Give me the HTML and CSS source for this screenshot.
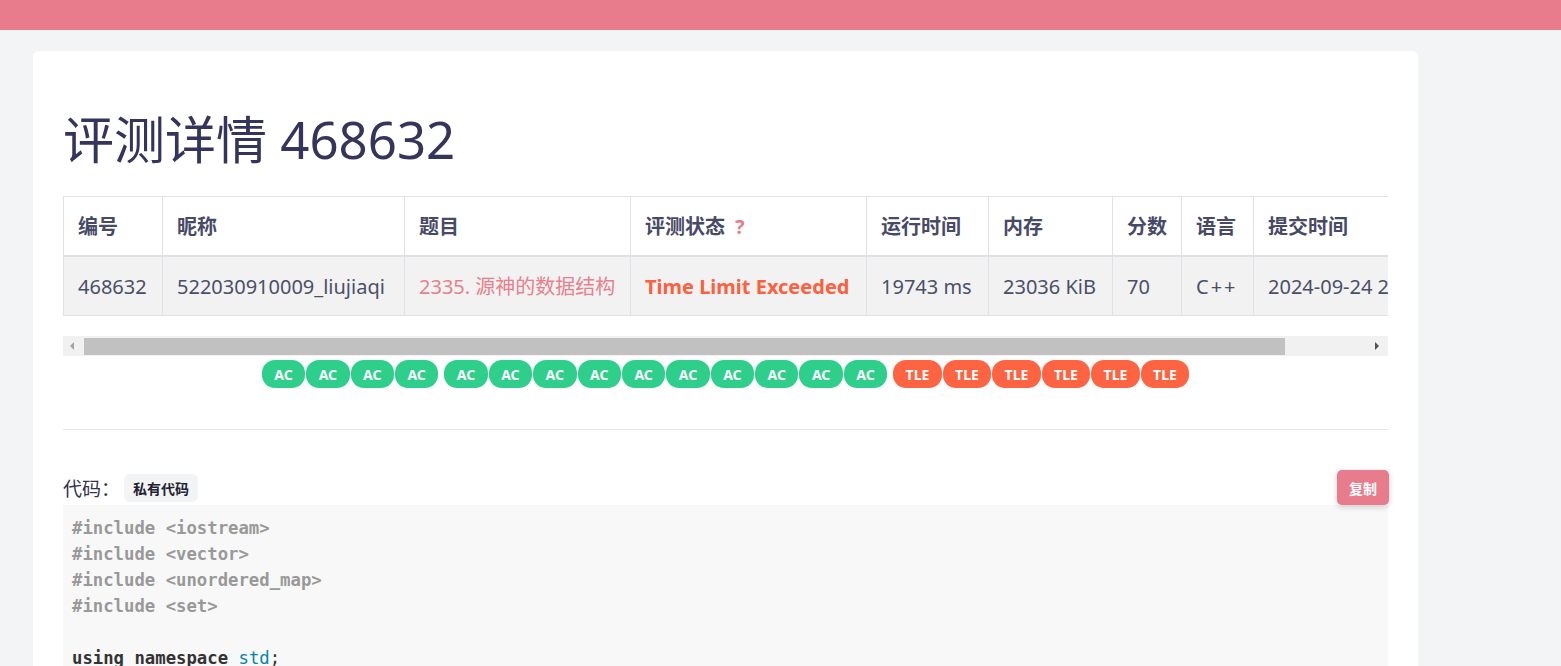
FILE: index.html
```html
<!DOCTYPE html>
<html lang="zh-CN">
<head>
<meta charset="utf-8">
<title>评测详情 468632</title>
<link rel="stylesheet" href="styles.css">
</head>
<body>
<nav class="topbar"></nav>
<main class="page">
  <section class="card">
    <h1 class="title">评测详情 468632</h1>
    <div class="table-scroll">
      <table class="info">
        <colgroup>
          <col class="c1"><col class="c2"><col class="c3"><col class="c4"><col class="c5"><col class="c6"><col class="c7"><col class="c8"><col class="c9">
        </colgroup>
        <thead>
          <tr>
            <th>编号</th><th>昵称</th><th>题目</th><th>评测状态<span class="help">?</span></th><th>运行时间</th><th>内存</th><th>分数</th><th>语言</th><th>提交时间</th>
          </tr>
        </thead>
        <tbody>
          <tr>
            <td>468632</td><td>522030910009_liujiaqi</td><td><a class="plink" href="#">2335. 源神的数据结构</a></td><td class="tle-text">Time Limit Exceeded</td><td>19743 ms</td><td>23036 KiB</td><td>70</td><td class="lang">C++</td><td>2024-09-24 20:51:36</td>
          </tr>
        </tbody>
      </table>
    </div>
    <div class="fake-scrollbar">
      <span class="sb-btn sb-left"><span class="tri-left"></span></span>
      <span class="sb-thumb"></span>
      <span class="sb-rest"></span>
      <span class="sb-btn sb-right"><span class="tri-right"></span></span>
    </div>
    <div class="verdicts">
      <div class="group">
        <span class="pill ac">AC</span><span class="pill ac">AC</span><span class="pill ac">AC</span><span class="pill ac">AC</span>
      </div>
      <div class="group">
        <span class="pill ac">AC</span><span class="pill ac">AC</span><span class="pill ac">AC</span><span class="pill ac">AC</span><span class="pill ac">AC</span><span class="pill ac">AC</span><span class="pill ac">AC</span><span class="pill ac">AC</span><span class="pill ac">AC</span><span class="pill ac">AC</span>
      </div>
      <div class="group">
        <span class="pill tle">TLE</span><span class="pill tle">TLE</span><span class="pill tle">TLE</span><span class="pill tle">TLE</span><span class="pill tle">TLE</span><span class="pill tle">TLE</span>
      </div>
    </div>
    <hr class="divider">
    <div class="code-head">
      <div class="code-label">代码：<span class="badge">私有代码</span></div>
      <button class="copy-btn">复制</button>
    </div>
<pre class="code"><span class="meta">#include &lt;iostream&gt;</span>
<span class="meta">#include &lt;vector&gt;</span>
<span class="meta">#include &lt;unordered_map&gt;</span>
<span class="meta">#include &lt;set&gt;</span>

<span class="kw">using namespace</span> <span class="bi">std</span>;

<span class="kw">const int</span> MAXN = <span class="num">200005</span>;
<span class="kw">int</span> n, m;
</pre>
  </section>
</main>
</body>
</html>
```

FILE: styles.css
```css
html, body {
  margin: 0;
  padding: 0;
}
body {
  background: #f3f4f6;
  font-family: "Noto Sans", "Noto Sans CJK SC", sans-serif;
  color: #474a66;
  overflow: hidden;
}
.topbar {
  height: 30px;
  background: #e87c8c;
}
.page {
  padding: 21px 0 0 33px;
}
.card {
  width: 1385px;
  box-sizing: border-box;
  background: #fff;
  border-radius: 6px;
  padding: 58px 30px 30px;
  min-height: 700px;
}
.title {
  margin: 0 0 27px;
  font-size: 51px;
  line-height: 60px;
  font-weight: 400;
  color: #35345c;
}
.table-scroll {
  width: 100%;
  overflow: hidden;
}
.info {
  width: 1420px;
  table-layout: fixed;
  border-collapse: collapse;
  margin-bottom: 20px;
  font-size: 20px;
  line-height: 28px;
}
.c1 { width: 99px; }
.c2 { width: 242px; }
.c3 { width: 226px; }
.c4 { width: 236px; }
.c5 { width: 122px; }
.c6 { width: 124px; }
.c7 { width: 69px; }
.c8 { width: 72px; }
.c9 { width: 230px; }
.info th, .info td {
  border: 1px solid #e0e2e7;
  padding: 15px 14px;
  text-align: left;
  white-space: nowrap;
  overflow: hidden;
}
.info th {
  font-weight: 700;
  font-size: 20px;
  color: #474a66;
  border-bottom: 2px solid #dde0e6;
  background: #fff;
  padding-top: 16px;
  padding-bottom: 14px;
}
.info td {
  background: #f2f2f2;
  color: #4a4f68;
  padding-top: 16px;
  padding-bottom: 14px;
}
.help {
  color: #e87c8c;
  font-weight: 700;
  margin-left: 10px;
}
.plink {
  color: #e8808e;
  text-decoration: none;
}
.info td.tle-text {
  color: #fe5f3f;
  font-weight: 700;
}
.info td.lang {
  letter-spacing: 2px;
}
.fake-scrollbar {
  display: flex;
  height: 20px;
  background: #f1f1f1;
  align-items: center;
}
.sb-btn {
  display: flex;
  align-items: center;
  justify-content: center;
  height: 20px;
}
.sb-left {
  width: 21px;
  justify-content: flex-start;
  padding-left: 7px;
  box-sizing: border-box;
}
.sb-right {
  width: 22px;
}
.tri-left {
  width: 0;
  height: 0;
  border-top: 4px solid transparent;
  border-bottom: 4px solid transparent;
  border-right: 4px solid #a3a3a3;
}
.tri-right {
  width: 0;
  height: 0;
  border-top: 4px solid transparent;
  border-bottom: 4px solid transparent;
  border-left: 4px solid #505050;
}
.sb-thumb {
  width: 1201px;
  height: 17px;
  background: #c1c1c1;
}
.sb-rest {
  flex: 1;
}
.verdicts {
  display: flex;
  justify-content: center;
  gap: 6px;
  margin-top: 4px;
}
.group {
  display: flex;
  gap: 1px;
}
.pill {
  display: inline-flex;
  align-items: center;
  justify-content: center;
  height: 28px;
  border-radius: 13px;
  color: #fff;
  font-weight: 700;
  font-size: 14px;
  box-sizing: border-box;
}
.pill.ac {
  width: 43.4px;
  background: #2ecf8b;
}
.pill.tle {
  width: 48.5px;
  background: #fe6442;
}
.divider {
  margin: 41px 0 40px;
  border: 0;
  border-top: 1px solid #e8e8e8;
  height: 0;
}
.code-head {
  display: flex;
  align-items: center;
  justify-content: space-between;
  height: 35px;
}
.code-label {
  display: flex;
  align-items: center;
  font-size: 19px;
  color: #33334f;
}
.badge {
  display: inline-flex;
  align-items: center;
  height: 28px;
  padding: 0 9px;
  margin-left: 4px;
  border-radius: 6px;
  background: #f3f4f6;
  font-size: 14px;
  font-weight: 700;
  color: #222233;
}
.copy-btn {
  height: 35px;
  padding: 0 12px;
  margin-right: -1px;
  border: 0;
  border-radius: 5px;
  background: #e87c8c;
  color: #fff;
  font-family: "Noto Sans", "Noto Sans CJK SC", sans-serif;
  font-size: 14px;
  font-weight: 700;
  box-shadow: 0 2px 6px rgba(0, 0, 0, 0.18);
}
.code {
  margin: 0;
  padding: 10px 9px 9px;
  background: #f8f8f8;
  font-family: "DejaVu Sans Mono", monospace;
  font-size: 17.3px;
  line-height: 26px;
  color: #333;
}
.meta {
  color: #999;
  font-weight: 700;
}
.kw {
  color: #333;
  font-weight: 700;
}
.bi {
  color: #0086b3;
}
.num {
  color: #008080;
}
```
